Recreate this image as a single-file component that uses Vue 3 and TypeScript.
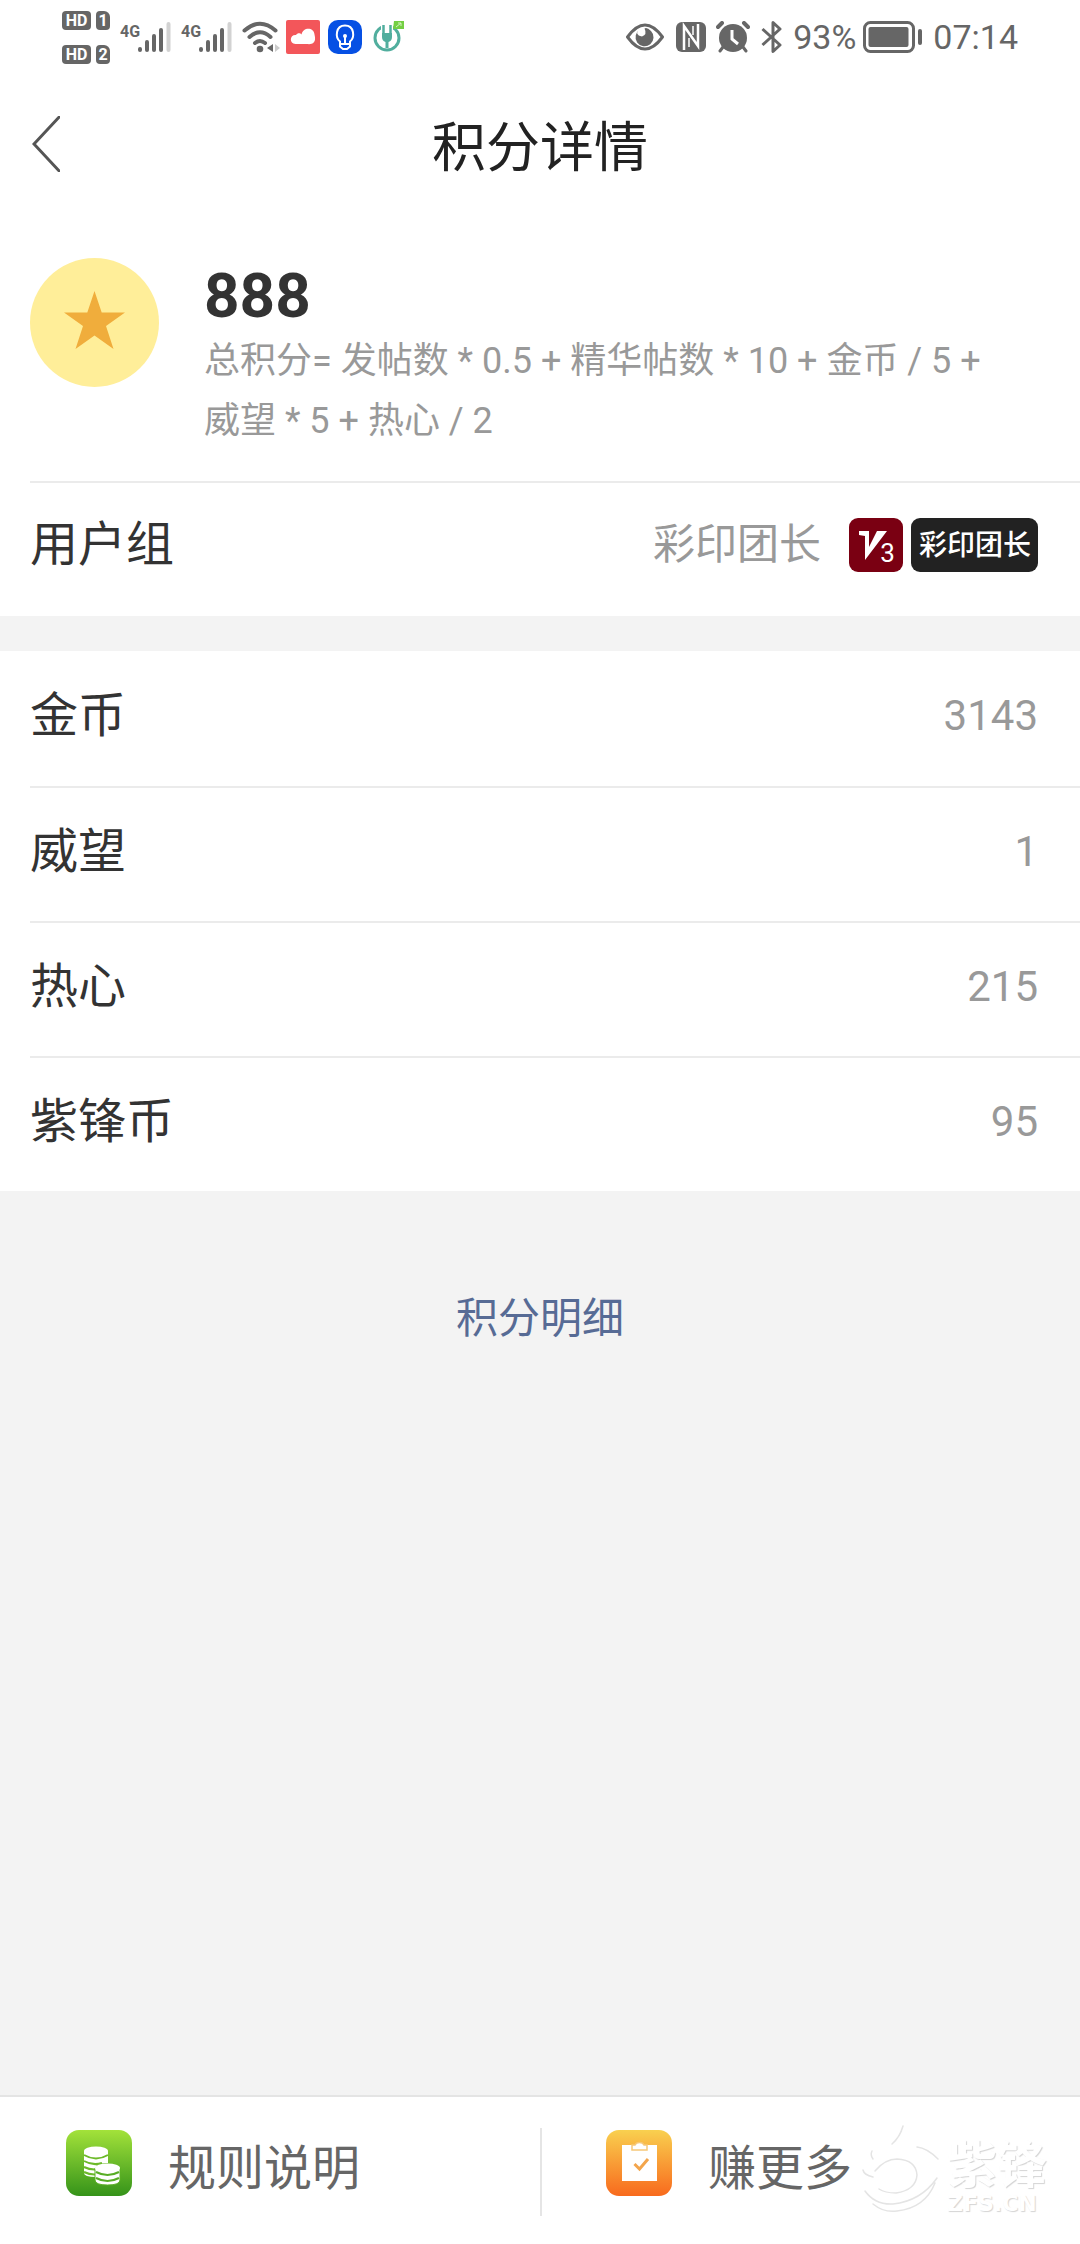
<script setup lang="ts">
interface Asset {
  name: string
  amount: number
}

const total = 888
const formula = '总积分= 发帖数 * 0.5 + 精华帖数 * 10 + 金币 / 5 + 威望 * 5 + 热心 / 2'
const group = '彩印团长'
const assets: Asset[] = [
  { name: '金币', amount: 3143 },
  { name: '威望', amount: 1 },
  { name: '热心', amount: 215 },
  { name: '紫锋币', amount: 95 },
]
const sims: number[] = [1, 2]
</script>

<template>
  <div class="page">
    <div class="status">
      <div class="status-side">
        <div class="sims">
          <div v-for="n in sims" :key="n" class="sim">
            <span class="hd">HD</span>
            <span class="slot">{{ n }}</span>
          </div>
        </div>
        <div v-for="n in sims" :key="n" class="signal">
          <span class="net">4G</span>
          <svg width="33" height="30" viewBox="0 0 33 30" aria-hidden="true">
            <g stroke="#666" stroke-width="4" stroke-linecap="round">
              <path d="M2 27v1M9 20v8M16 14v14M23 8v20" />
              <path d="M30.500 2v26" stroke="#d2d2d2" />
            </g>
          </svg>
        </div>
        <svg class="wifi" width="38" height="32" viewBox="0 0 38 32" aria-hidden="true">
          <g fill="none" stroke="#666" stroke-width="4" stroke-linecap="round">
            <path d="M2.500 9.500Q18 -4 33.500 9.500" />
            <path d="M7.500 16Q18 6.500 28.500 16" />
            <path d="M13 22Q18 18 23 22" />
          </g>
          <circle cx="18" cy="28" r="3.300" fill="#666" />
          <path d="M31 23v8l-6-4z" fill="#666" />
          <path d="M33 23v8l5-4z" fill="#ccc" />
        </svg>
        <svg class="app" width="34" height="34" viewBox="0 0 34 34" aria-hidden="true">
          <rect width="34" height="34" rx="2" fill="#f3565a" />
          <path d="M9.500 24C3 23.500 3.500 14.500 10 15c1.500-2.500 4.500-2 5.500-.5C17 6.500 28 7 28.500 14.500 31 24 25 24.500 21 24z" fill="#fff" />
        </svg>
        <svg class="app" width="34" height="34" viewBox="0 0 34 34" aria-hidden="true">
          <rect width="34" height="34" rx="10" fill="#0650e4" />
          <g fill="none" stroke="#fff" stroke-width="2">
            <path d="M12 21.500C7 17.500 7.500 5.500 17 5.500S27 17.500 22 21.500v5L19 29h-4l-3-2.500z" />
            <path d="M17 15v9M12 24h10" />
          </g>
          <circle cx="17" cy="16" r="2" fill="#fff" />
        </svg>
        <svg class="plug" width="32" height="34" viewBox="0 0 32 34" aria-hidden="true">
          <circle cx="14" cy="18" r="12" fill="none" stroke="#51ae9e" stroke-width="3" />
          <path d="M8 3h12v9H8z" fill="#fff" />
          <path d="M10.500 5v9M17.500 5v9" stroke="#51ae9e" stroke-width="2.500" />
          <path d="M9 13h10v4q0 4-3.500 5v6h-3v-6Q9 21 9 17z" fill="#51ae9e" />
          <path d="M21 1h10v8H20z" fill="#74cf43" />
          <path d="M23 7l5-4M25 3h3v3" fill="none" stroke="#d4f2bf" stroke-width="1" />
        </svg>
      </div>
      <div class="status-side">
        <svg width="38" height="28" viewBox="0 0 38 28" aria-hidden="true">
          <path d="M1.500 14Q19-10 36.500 14Q19 38 1.500 14z" fill="none" stroke="#666" stroke-width="3" stroke-linejoin="round" />
          <path d="M14 6.500a9 9 0 1 0 11 1.500Q21 4 18.500 5.500q3 6-2.500 8-4-.5-5-3.500 1-2.500 3-3.500z" fill="#666" />
        </svg>
        <svg class="nfc" width="30" height="30" viewBox="0 0 30 30" aria-hidden="true">
          <rect width="30" height="30" rx="6" fill="#666" />
          <path d="M8 28V4l14 20V2" fill="none" stroke="#fff" stroke-width="2.500" />
          <path d="M13 16v9M17 4v9" stroke="#fff" stroke-width="1.500" />
        </svg>
        <svg class="alarm" width="34" height="32" viewBox="0 0 34 32" aria-hidden="true">
          <circle cx="17" cy="17" r="14" fill="#666" />
          <path d="M2 6l4-4M32 6l-4-4" stroke="#666" stroke-width="4" stroke-linecap="round" />
          <path d="M7 26l-3 4M27 26l3 4" stroke="#666" stroke-width="3" stroke-linecap="round" />
          <path d="M16 9v9l6 5" fill="none" stroke="#fff" stroke-width="3" />
        </svg>
        <svg class="bt" width="22" height="34" viewBox="0 0 22 34" aria-hidden="true">
          <path d="M1.500 9L19 25l-7 6.500v-29L19 9 1.500 25" fill="none" stroke="#666" stroke-width="3" stroke-linejoin="round" />
        </svg>
        <span class="percent">93%</span>
        <svg class="battery" width="59" height="32" viewBox="0 0 59 32" aria-hidden="true">
          <rect x="1.500" y="1.500" width="49" height="29" rx="6" fill="none" stroke="#666" stroke-width="3" />
          <rect x="5.500" y="6" width="40" height="20" rx="2" fill="#666" />
          <rect x="55" y="8" width="4" height="16" rx="2" fill="#666" />
        </svg>
        <span class="clock">07:14</span>
      </div>
    </div>

    <header class="bar">
      <button class="back" type="button" aria-label="返回">
        <svg width="28" height="56" viewBox="0 0 28 56" aria-hidden="true">
          <path d="M30-2L2 28l28 30" fill="none" stroke="#555" stroke-width="3" />
        </svg>
      </button>
      <h1>积分详情</h1>
    </header>

    <main>
      <section class="card">
        <div class="profile">
          <svg class="medal" width="129" height="129" viewBox="0 0 129 129" aria-hidden="true">
            <circle cx="64.500" cy="64.500" r="64.500" fill="#ffee99" />
            <path d="M64.500 33l7.200 21.500H95L76 68l7.500 23-19-13.500L45.500 91 53 68 34 54.500h23.300z" fill="#f0ad3c" />
          </svg>
          <div class="score">
            <strong>{{ total }}</strong>
            <p>{{ formula }}</p>
          </div>
        </div>
        <div class="group">
          <span class="label">用户组</span>
          <span class="group-name">{{ group }}</span>
          <span class="level">
            <svg width="28" height="30" viewBox="0 0 28 30" aria-hidden="true">
              <path d="M0 0h10v16L18 0h10L6 29V5L0 4z" fill="#fff" />
            </svg>
            <span class="level-no">3</span>
          </span>
          <span class="tag">{{ group }}</span>
        </div>
      </section>

      <dl class="card assets">
        <div v-for="a in assets" :key="a.name" class="asset">
          <dt class="label">{{ a.name }}</dt>
          <dd>{{ a.amount }}</dd>
        </div>
      </dl>

      <a class="detail" href="#detail">积分明细</a>
    </main>

    <footer class="actions">
      <button class="action" type="button">
        <svg width="66" height="66" viewBox="0 0 66 66" aria-hidden="true">
          <defs>
            <linearGradient id="green" x1="0" y1="0" x2="0" y2="1">
              <stop offset="0" stop-color="#a3e23a" />
              <stop offset="1" stop-color="#35931a" />
            </linearGradient>
          </defs>
          <rect width="66" height="66" rx="13" fill="url(#green)" />
          <path d="M18 21v22q0 4 12 4V36q2-3 12-3V21z" fill="#fff" />
          <ellipse cx="30" cy="21" rx="12" ry="4.500" fill="#fff" />
          <path d="M18 25q12 7 24 0M18 31q9 5 18 2M18 37q6 3 12 2.500M18 42q6 3 12 2.500" fill="none" stroke="#6cba29" stroke-width="2" />
          <path d="M29 38v12q0 5 12.500 5T54 50V38z" fill="#fff" stroke="#5aaf25" stroke-width="1" />
          <ellipse cx="41.500" cy="38" rx="12.500" ry="4.500" fill="#fff" />
          <path d="M30 42q11.500 6 23 0M30 48q11.500 6 23 0" fill="none" stroke="#58ad25" stroke-width="2" />
        </svg>
        <span>规则说明</span>
      </button>
      <button class="action" type="button">
        <svg width="66" height="66" viewBox="0 0 66 66" aria-hidden="true">
          <defs>
            <linearGradient id="orange" x1="0" y1="0" x2="0" y2="1">
              <stop offset="0" stop-color="#f9d04f" />
              <stop offset="1" stop-color="#f86a1d" />
            </linearGradient>
          </defs>
          <rect width="66" height="66" rx="13" fill="url(#orange)" />
          <path d="M16 15h35v36H16z" fill="#fff" />
          <path d="M26 15h3q1-2.500 4.500-2.500T38 15h3v5H26z" fill="#fff" stroke="#f6c878" stroke-width="1.500" />
          <path d="M28.500 34l5 5L42 29" fill="none" stroke="#f3a54c" stroke-width="3" />
        </svg>
        <span>赚更多</span>
      </button>
      <div class="watermark">
        <svg width="80" height="94" viewBox="0 0 80 94" aria-hidden="true">
          <g fill="none" stroke="#e4e4e4" stroke-width="1.500" stroke-linecap="round">
            <path d="M43 4Q40 15 32 22M12 29q-2 4 1 8M3 48q1 5 10 7M57 25q10 1 21 12" />
            <path d="M15 49Q25 37 37 37q19 1 20 16-1 15-21 18-11 0-17-4" />
            <path d="M5 69q10 14 28 13 28-3 44-26M13 82q11 9 24 7 28-3 38-28" />
          </g>
        </svg>
        <div class="brand">
          <span class="brand-name">紫锋</span>
          <span class="brand-site">ZFS.CN</span>
        </div>
      </div>
    </footer>
  </div>
</template>

<style>
body {
  margin: 0;
  background: #f3f3f3;
}
</style>

<style scoped>
.page {
  display: flex;
  flex-direction: column;
  min-height: 100vh;
  background: #f3f3f3;
  color: #333;
  font-family: Roboto, "Noto Sans CJK SC", sans-serif;
}

button {
  margin: 0;
  padding: 0;
  border: 0;
  background: none;
  color: inherit;
  font: inherit;
  cursor: pointer;
}

svg {
  display: block;
  flex: none;
}

.status {
  display: flex;
  justify-content: space-between;
  height: 74px;
  padding: 0 62px;
  background: #fff;
  color: #666;
}

.status-side {
  display: flex;
  align-items: center;
  height: 74px;
}

.sims {
  display: flex;
  flex-direction: column;
  gap: 15px;
  margin-right: 10px;
}

.sim {
  display: flex;
  gap: 5px;
}

.hd,
.slot {
  box-sizing: border-box;
  height: 19px;
  border-radius: 4px;
  background: #666;
  color: #fff;
  font-size: 16px;
  font-weight: 700;
  line-height: 19px;
  text-align: center;
}

.hd {
  width: 29px;
}

.slot {
  width: 14px;
  border-top-right-radius: 6px;
}

.signal {
  display: flex;
  align-items: center;
  width: 61px;
}

.net {
  width: 18px;
  height: 34px;
  font: 700 16px/24px "Liberation Sans Narrow", Roboto, sans-serif;
}

.wifi {
  margin-right: 6px;
}

.app {
  margin-right: 8px;
}

.plug {
  margin-left: 3px;
}

.nfc {
  margin-left: 12px;
}

.alarm {
  margin-left: 10px;
}

.bt {
  margin-left: 11px;
}

.percent,
.clock {
  font-size: 34px;
  line-height: 40px;
}

.percent {
  margin-left: 10px;
}

.battery {
  margin: 0 11px 0 7px;
}

.bar {
  position: relative;
  display: flex;
  align-items: center;
  justify-content: center;
  height: 144px;
  background: #fff;
}

.back {
  position: absolute;
  left: 32px;
  top: 42px;
}

h1 {
  margin: 0;
  padding-top: 5px;
  color: #222;
  font-size: 54px;
  font-weight: 400;
  line-height: 72px;
}

.card {
  margin: 0;
  padding-left: 30px;
  background: #fff;
}

.profile {
  display: flex;
  gap: 45px;
  padding: 40px 60px 30px 0;
}

.score {
  flex: 1;
  padding-top: 3px;
}

.score strong {
  display: block;
  font-size: 62px;
  font-weight: 700;
  line-height: 70px;
}

.score p {
  margin: 0;
  color: #999;
  font-size: 36px;
  line-height: 60px;
}

.group,
.asset {
  display: flex;
  align-items: center;
  box-sizing: border-box;
  height: 135px;
  padding: 0 42px 5px 0;
}

.group {
  padding-bottom: 9px;
  border-top: 2px solid #ebebeb;
}

.label {
  flex: 1;
  font-size: 48px;
  line-height: 60px;
}

.group-name {
  color: #999;
  font-size: 42px;
  line-height: 60px;
}

.level,
.tag {
  box-sizing: border-box;
  height: 54px;
  border-radius: 9px;
  color: #fff;
}

.level {
  position: relative;
  width: 54px;
  margin: 0 8px 0 28px;
  padding: 13px 0 0 10px;
  background: #7a0012;
}

.level-no {
  position: absolute;
  right: 8px;
  bottom: 5px;
  font-size: 26px;
  line-height: 28px;
}

.tag {
  padding: 0 7px 0 8px;
  background: #222;
  font-size: 28px;
  font-weight: 500;
  line-height: 56px;
}

.assets {
  margin-top: 35px;
}

.asset + .asset {
  border-top: 2px solid #ebebeb;
}

.asset dd {
  margin: 0;
  color: #999;
  font-size: 42px;
  line-height: 60px;
}

main {
  display: flex;
  flex-direction: column;
}

.detail {
  align-self: center;
  margin: 98px 0;
  color: #576b95;
  font-size: 42px;
  line-height: 60px;
  text-decoration: none;
}

.actions {
  position: relative;
  display: flex;
  margin-top: auto;
  padding: 31px 0 28px;
  border-top: 2px solid #e4e4e4;
  background: #fff;
}

.action {
  display: flex;
  flex: 1;
  gap: 36px;
  height: 88px;
  padding: 2px 0 0 66px;
  color: #666;
  font-size: 48px;
  line-height: 78px;
}

.action + .action {
  padding-left: 64px;
  border-left: 2px solid #e5e5e5;
}

.watermark {
  position: absolute;
  right: 26px;
  bottom: 28px;
  display: flex;
  align-items: flex-end;
  gap: 7px;
  pointer-events: none;
}

.brand {
  display: flex;
  flex-direction: column;
  width: 107px;
  color: #fff;
  text-shadow: 1px 1px 1px #d4d4d4;
}

.brand-name {
  font-size: 50px;
  font-weight: 700;
  line-height: 52px;
}

.brand-site {
  font: 700 22px/24px "DejaVu Sans", sans-serif;
}
</style>
